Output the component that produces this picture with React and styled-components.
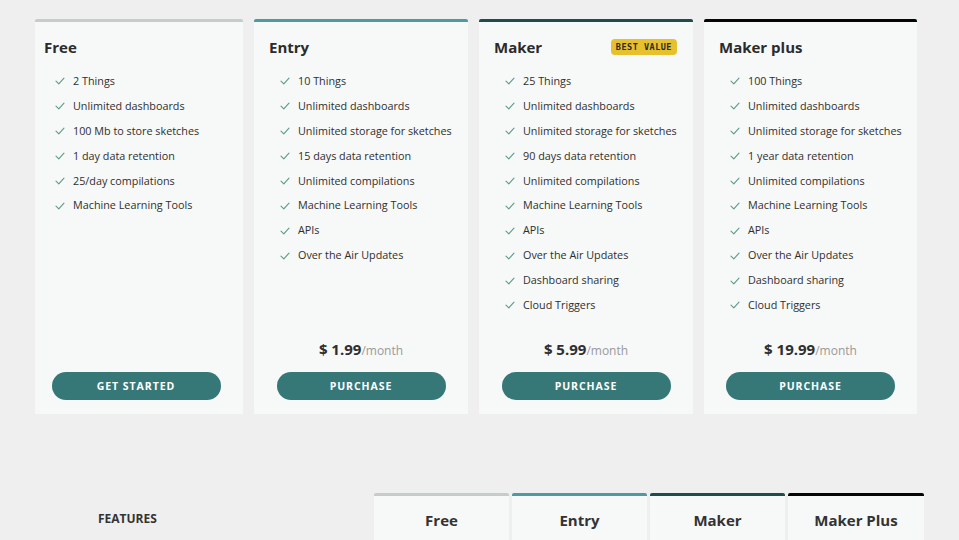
import React from "react";
import styled, { createGlobalStyle } from "styled-components";

const Global = createGlobalStyle`
  html, body { margin: 0; padding: 0; background: #efefef; }
  body { font-family: "Open Sans", "Noto Sans", sans-serif; color: #2c2c2c; }
`;

const Page = styled.div`
  width: 959px;
  height: 540px;
  overflow: hidden;
  padding-top: 19px;
  box-sizing: border-box;
`;

const Plans = styled.div`
  display: grid;
  grid-template-columns: 208px 214px 214px 213px;
  column-gap: 11px;
  margin-left: 35px;
`;

const Card = styled.div`
  display: flex;
  flex-direction: column;
  height: 395px;
  box-sizing: border-box;
  background: #f7f8f8;
  border-top: 3px solid ${(p) => p.$accent};
  border-radius: 2px 2px 0 0;
  padding: 14px 15px 14px ${(p) => (p.$first ? "9px" : "15px")};
`;

const Head = styled.div`
  display: flex;
  align-items: center;
  justify-content: space-between;
  height: 22px;
`;

const Title = styled.div`
  font-size: 15px;
  font-weight: 700;
  color: #2b2b2b;
  line-height: 22px;
`;

const Badge = styled.span`
  background: #e7c02e;
  color: #2a2a2a;
  font-family: "DejaVu Sans Mono", "Liberation Mono", monospace;
  font-weight: 700;
  font-size: 8.5px;
  letter-spacing: 0.5px;
  padding: 3px 5px;
  border-radius: 4px;
  margin-right: 1px;
  line-height: 10px;
`;

const List = styled.ul`
  list-style: none;
  margin: 11px 0 0;
  padding: 0 0 0 11px;
`;

const Item = styled.li`
  display: flex;
  align-items: center;
  gap: 8px;
  font-size: 10.8px;
  line-height: 24.9px;
  height: 24.9px;
  color: #2f2f2f;
  white-space: nowrap;
`;

const Spacer = styled.div`
  flex: 1;
`;

const Price = styled.div`
  text-align: center;
  line-height: 20px;
  font-size: 15px;
  font-weight: 700;
  color: #2f2f2f;
`;

const Per = styled.span`
  font-size: 12px;
  font-weight: 400;
  color: #9a9a9a;
`;

const Button = styled.button`
  align-self: center;
  width: 169px;
  height: 28px;
  margin-top: 11px;
  border: none;
  border-radius: 14px;
  background: #367878;
  color: #fff;
  font-family: "Open Sans", "Noto Sans", sans-serif;
  font-weight: 700;
  font-size: 10.5px;
  letter-spacing: 0.95px;
  text-transform: uppercase;
  cursor: pointer;
`;

const Compare = styled.div`
  display: grid;
  grid-template-columns: 336px 135px 135px 135px 136px;
  column-gap: 3px;
  margin: 79px 0 0 35px;
`;

const FeatLabel = styled.div`
  font-size: 12px;
  font-weight: 700;
  color: #333;
  padding: 17px 0 0 63px;
`;

const ColHead = styled.div`
  background: #f7f8f8;
  border-top: 3px solid ${(p) => p.$accent};
  border-radius: 2px 2px 0 0;
  height: 60px;
  text-align: center;
  font-size: 15px;
  font-weight: 700;
  color: #333;
  padding-top: 14px;
  box-sizing: border-box;
`;

const Check = () => (
  <svg width="10" height="8" viewBox="0 0 10 8" fill="none">
    <path d="M1 4.2 L3.8 6.8 L9 1.2" stroke="#5b9a8b" strokeWidth="1.1" strokeLinecap="round" strokeLinejoin="round" />
  </svg>
);

const plans = [
  {
    name: "Free",
    accent: "#c8cbcb",
    first: true,
    items: ["2 Things", "Unlimited dashboards", "100 Mb to store sketches", "1 day data retention", "25/day compilations", "Machine Learning Tools"],
    cta: "Get started",
  },
  {
    name: "Entry",
    accent: "#4e9aa2",
    items: ["10 Things", "Unlimited dashboards", "Unlimited storage for sketches", "15 days data retention", "Unlimited compilations", "Machine Learning Tools", "APIs", "Over the Air Updates"],
    price: "1.99",
    cta: "Purchase",
  },
  {
    name: "Maker",
    accent: "#1f4d4e",
    badge: "BEST VALUE",
    items: ["25 Things", "Unlimited dashboards", "Unlimited storage for sketches", "90 days data retention", "Unlimited compilations", "Machine Learning Tools", "APIs", "Over the Air Updates", "Dashboard sharing", "Cloud Triggers"],
    price: "5.99",
    cta: "Purchase",
  },
  {
    name: "Maker plus",
    accent: "#050505",
    items: ["100 Things", "Unlimited dashboards", "Unlimited storage for sketches", "1 year data retention", "Unlimited compilations", "Machine Learning Tools", "APIs", "Over the Air Updates", "Dashboard sharing", "Cloud Triggers"],
    price: "19.99",
    cta: "Purchase",
  },
];

const cols = [
  { name: "Free", accent: "#c8cbcb" },
  { name: "Entry", accent: "#4e9aa2" },
  { name: "Maker", accent: "#1f4d4e" },
  { name: "Maker Plus", accent: "#050505" },
];

export default function App() {
  return (
    <Page>
      <Global />
      <Plans>
        {plans.map((p) => (
          <Card key={p.name} $accent={p.accent} $first={p.first}>
            <Head>
              <Title>{p.name}</Title>
              {p.badge && <Badge>{p.badge}</Badge>}
            </Head>
            <List>
              {p.items.map((it) => (
                <Item key={it}>
                  <Check />
                  {it}
                </Item>
              ))}
            </List>
            <Spacer />
            {p.price && (
              <Price>
                $ {p.price}
                <Per>/month</Per>
              </Price>
            )}
            <Button>{p.cta}</Button>
          </Card>
        ))}
      </Plans>
      <Compare>
        <FeatLabel>FEATURES</FeatLabel>
        {cols.map((c) => (
          <ColHead key={c.name} $accent={c.accent}>
            {c.name}
          </ColHead>
        ))}
      </Compare>
    </Page>
  );
}
